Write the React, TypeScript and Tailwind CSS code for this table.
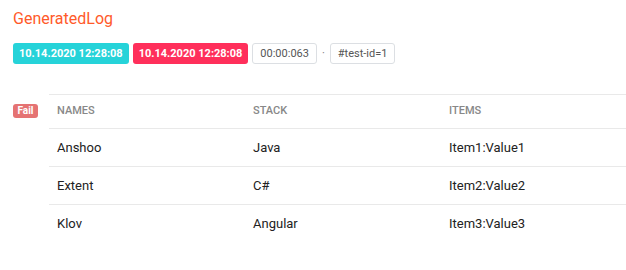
import React from 'react'

const rows = [
  {name: 'Anshoo', stack: 'Java', items: 'Item1:Value1'},
  {name: 'Extent', stack: 'C#', items: 'Item2:Value2'},
  {name: 'Klov', stack: 'Angular', items: 'Item3:Value3'},
]

const App = () => {
  return (
    <div className="w-[626px] h-[270px] overflow-hidden bg-white font-['Roboto',sans-serif] pl-[13px] pt-[8px]">
      <h5 className="text-[16px] leading-[22px] text-[#ff5a2a]">GeneratedLog</h5>

      {/* badges */}
      <div className="mt-[13px] flex items-center gap-[4px] text-[11px] leading-[13px]">
        <span className="px-[6px] py-[4px] rounded-[3px] bg-[#26d3d9] text-white font-bold">
          10.14.2020 12:28:08
        </span>
        <span className="px-[6px] py-[4px] rounded-[3px] bg-[#ff2f5b] text-white font-bold">
          10.14.2020 12:28:08
        </span>
        <span className="px-[7px] py-[3px] rounded-[3px] border border-[#dcdfe3] text-[#555]">
          00:00:063
        </span>
        <span className="text-[#777] px-[1px]">·</span>
        <span className="px-[7px] py-[3px] rounded-[3px] border border-[#dcdfe3] text-[#555]">
          #test-id=1
        </span>
      </div>

      {/* log */}
      <div className="mt-[30px] flex">
        <div className="w-[36px] shrink-0 pt-[3px]">
          <span className="inline-block w-[25px] h-[14px] rounded-[3px] bg-[#e57373] text-white text-[10px] leading-[14px] font-bold text-center">
            Fail
          </span>
        </div>
        <table className="w-[588px] shrink-0 border-collapse table-fixed">
          <thead>
            <tr className="border-t border-b border-[#e9e9e9] h-[34px]">
              <th className="w-[196px] px-[8px] text-left text-[11px] font-medium text-[#888] uppercase">Names</th>
              <th className="w-[196px] px-[8px] text-left text-[11px] font-medium text-[#888] uppercase">Stack</th>
              <th className="w-[196px] px-[8px] text-left text-[11px] font-medium text-[#888] uppercase">Items</th>
            </tr>
          </thead>
          <tbody>
            {rows.map((r, i) => (
              <tr key={r.name} className={`h-[38px] ${i < rows.length - 1 ? 'border-b border-[#e9e9e9]' : ''}`}>
                <td className="px-[8px] text-[13px] text-[#222]">{r.name}</td>
                <td className="px-[8px] text-[13px] text-[#222]">{r.stack}</td>
                <td className="px-[8px] text-[13px] text-[#222]">{r.items}</td>
              </tr>
            ))}
          </tbody>
        </table>
      </div>
    </div>
  )
}

export default App
